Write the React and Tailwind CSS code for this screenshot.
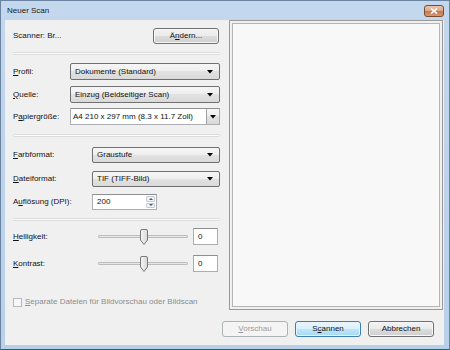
import React from "react";

const Arrow = () => (
  <svg width="6" height="4" viewBox="0 0 6 4" className="shrink-0">
    <path d="M0 0 L6 0 L3 3.5 Z" fill="#000" />
  </svg>
);

function Combo({ cls, text }) {
  return (
    <div
      className={
        "flex items-center border border-[#707070] rounded-[2px] bg-[linear-gradient(#f6f6f6,#eeeeee_50%,#e2e2e2_50%,#d9d9d9)] pl-[4px] pr-[6px] " +
        cls
      }
    >
      <span className="flex-1 whitespace-nowrap">{text}</span>
      <Arrow />
    </div>
  );
}

function Sep() {
  return <div className="h-[3px] rounded-full border border-[#dcdcdc] bg-[#fbfbfb]" />;
}

function Btn({ children, kind }) {
  const base = "w-[66px] h-[16px] flex items-center justify-center rounded-[3px] border ";
  if (kind === "disabled")
    return (
      <div className={base + "border-[#adb2b5] bg-[#f4f4f4] text-[#9a9a9a]"}>{children}</div>
    );
  if (kind === "default")
    return (
      <div
        className={
          base +
          "border-[#3c7fb1] bg-[linear-gradient(#eaf6fd,#d9f0fc_50%,#bee6fd_50%,#a7d9f5)] shadow-[inset_0_0_0_1px_#e5f4fc]"
        }
      >
        {children}
      </div>
    );
  return (
    <div
      className={
        base +
        "border-[#707070] bg-[linear-gradient(#f2f2f2,#ebebeb_50%,#dddddd_50%,#cfcfcf)] shadow-[inset_0_0_0_1px_#f8f8f8]"
      }
    >
      {children}
    </div>
  );
}

function Thumb() {
  return (
    <svg width="8" height="16" viewBox="0 0 8 16" className="absolute left-[42px] top-[0px]">
      <defs>
        <linearGradient id="tg" x1="0" y1="0" x2="1" y2="0">
          <stop offset="0" stopColor="#f6f6f6" />
          <stop offset="1" stopColor="#d8d8d8" />
        </linearGradient>
      </defs>
      <path
        d="M2 0.5 H6 A1.5 1.5 0 0 1 7.5 2 V11 L4 15.5 L0.5 11 V2 A1.5 1.5 0 0 1 2 0.5 Z"
        fill="url(#tg)"
        stroke="#7a7a7a"
      />
    </svg>
  );
}

function SliderRow({ label, mt }) {
  return (
    <div className={"flex items-center h-[17px] " + mt}>
      <div className="w-[85px]">{label}</div>
      <div className="relative w-[90px] h-[16px] flex items-center">
        <div className="w-full h-[3px] border border-[#bcbcbc] bg-[#e8e8e8] rounded-[1px]" />
        <Thumb />
      </div>
      <div className="ml-[5px] w-[25px] h-[17px] border border-[#abadb3] border-t-[#8e8f8f] bg-white flex items-center pl-[4px]">
        0
      </div>
    </div>
  );
}

export default function App() {
  return (
    <div className="w-[450px] h-[350px] bg-[linear-gradient(#c3d7ed,#b9d0e9)] border border-[#6a84a0] border-b-[#26607a] flex flex-col font-['Liberation_Sans',Arial,sans-serif] text-[8px] text-[#111]">
      <div className="h-[19px] flex items-center pl-[6px] pr-[5px]">
        <span className="text-[#1a1a1a]">Neuer Scan</span>
        <div className="ml-auto mt-[1px] w-[20px] h-[12px] rounded-[3px] border border-[#7a4a33] bg-[linear-gradient(#ebc6ae,#dba483_50%,#c5764f_50%,#d69672)] flex items-center justify-center">
          <svg width="8" height="6" viewBox="0 0 8 6">
            <path d="M1 0.5 L7 5.5 M7 0.5 L1 5.5" stroke="#fff" strokeWidth="1.6" />
          </svg>
        </div>
      </div>
      <div className="flex-1 ml-[4px] mr-[5px] mb-[4px] bg-[#f0f0f0] flex flex-col">
        <div className="flex h-[292px]">
          <div className="w-[215px] pl-[8px] pt-[8px] flex flex-col">
            <div className="h-[15px] flex items-center justify-between">
              <span>Scanner: Br...</span>
              <div className="mr-[1px]">
                <Btn>
                  <span>
                    Ä<span className="underline">n</span>dern...
                  </span>
                </Btn>
              </div>
            </div>
            <div className="mt-[9px]">
              <Sep />
            </div>
            <div className="mt-[8px] flex items-center h-[17px]">
              <div className="w-[57px]">
                <span className="underline">P</span>rofil:
              </div>
              <Combo cls="w-[150px] h-[17px]" text="Dokumente (Standard)" />
            </div>
            <div className="mt-[6px] flex items-center h-[17px]">
              <div className="w-[57px]">
                <span className="underline">Q</span>uelle:
              </div>
              <Combo cls="w-[150px] h-[17px]" text="Einzug (Beidseitiger Scan)" />
            </div>
            <div className="mt-[5px] flex items-center h-[17px]">
              <div className="w-[57px]">
                P<span className="underline">a</span>piergröße:
              </div>
              <div className="w-[150px] h-[17px] flex border border-[#abadb3] border-t-[#8e8f8f] bg-white">
                <div className="flex-1 flex items-center pl-[2px] whitespace-nowrap">
                  A4 210 x 297 mm (8.3 x 11.7 Zoll)
                </div>
                <div className="w-[13px] border-l border-[#a0a0a0] bg-[linear-gradient(#f6f6f6,#eeeeee_50%,#e2e2e2_50%,#d9d9d9)] flex items-center justify-center">
                  <Arrow />
                </div>
              </div>
            </div>
            <div className="mt-[9px]">
              <Sep />
            </div>
            <div className="mt-[10px] flex items-center h-[16px]">
              <div className="w-[79px]">
                <span className="underline">F</span>arbformat:
              </div>
              <Combo cls="w-[128px] h-[16px]" text="Graustufe" />
            </div>
            <div className="mt-[8px] flex items-center h-[16px]">
              <div className="w-[79px]">
                <span className="underline">D</span>ateiformat:
              </div>
              <Combo cls="w-[128px] h-[16px]" text="TIF (TIFF-Bild)" />
            </div>
            <div className="mt-[7px] flex items-center h-[16px]">
              <div className="w-[79px]">
                A<span className="underline">u</span>flösung (DPI):
              </div>
              <div className="w-[65px] h-[16px] flex border border-[#abadb3] border-t-[#8e8f8f] bg-white">
                <div className="flex-1 flex items-center pl-[4px]">200</div>
                <div className="w-[11px] flex flex-col p-[1px] gap-[1px]">
                  <div className="flex-1 rounded-[1px] border border-[#c6cdd4] bg-[#eef2f6] flex items-center justify-center">
                    <svg width="4" height="2" viewBox="0 0 4 2">
                      <path d="M0 2 L4 2 L2 0 Z" fill="#4d5a66" />
                    </svg>
                  </div>
                  <div className="flex-1 rounded-[1px] border border-[#c6cdd4] bg-[#eef2f6] flex items-center justify-center">
                    <svg width="4" height="2" viewBox="0 0 4 2">
                      <path d="M0 0 L4 0 L2 2 Z" fill="#4d5a66" />
                    </svg>
                  </div>
                </div>
              </div>
            </div>
            <div className="mt-[8px]">
              <Sep />
            </div>
            <SliderRow
              mt="mt-[7px]"
              label={
                <span>
                  <span className="underline">H</span>elligkeit:
                </span>
              }
            />
            <SliderRow
              mt="mt-[10px]"
              label={
                <span>
                  <span className="underline">K</span>ontrast:
                </span>
              }
            />
            <div className="mt-[24px] h-[12px] flex items-center text-[#8d8d8d]">
              <div className="w-[9px] h-[9px] border border-[#b8b8b8] bg-[#f7f7f7] mr-[3px]" />
              <span>
                <span className="underline">S</span>eparate Dateien für Bildvorschau oder Bildscan
              </span>
            </div>
          </div>
          <div className="ml-[9px] w-[214px] h-[290px] border border-[#9a9a9a] bg-[#f0f0f0] p-[2px]">
            <div className="w-full h-full border border-[#b5b5b5] bg-[#f8f8f8]" />
          </div>
        </div>
        <div className="mt-[9px] flex justify-end gap-[7px] pr-[10px]">
          <Btn kind="disabled">
            <span>
              <span className="underline">V</span>orschau
            </span>
          </Btn>
          <Btn kind="default">
            <span>
              S<span className="underline">c</span>annen
            </span>
          </Btn>
          <Btn>Abbrechen</Btn>
        </div>
      </div>
    </div>
  );
}
